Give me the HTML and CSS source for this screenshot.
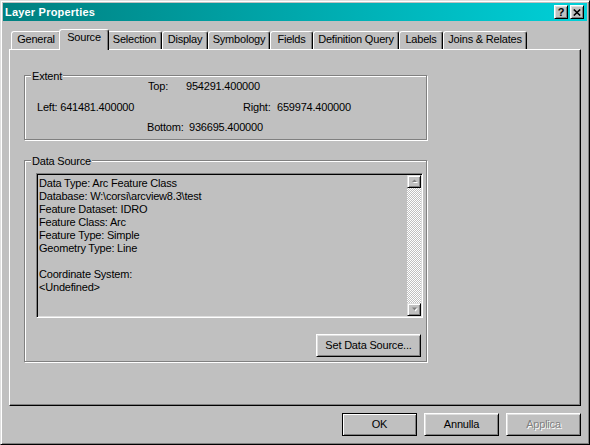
FILE: index.html
```html
<!DOCTYPE html>
<html>
<head>
<meta charset="utf-8">
<title>Layer Properties</title>
<link rel="stylesheet" href="styles.css">
</head>
<body>
<div class="window">
  <div class="titlebar">
    <span class="title">Layer Properties</span>
    <div class="caption-buttons">
      <button class="cap-btn cap-help">?</button>
      <button class="cap-btn cap-close"><svg width="8" height="7" viewBox="0 0 8 7"><path d="M0.8 0.5L7.2 6.5M7.2 0.5L0.8 6.5" stroke="#000" stroke-width="1.6" fill="none"/></svg></button>
    </div>
  </div>
  <div class="tabs">
    <div class="tab t-general">General</div>
    <div class="tab tab-active t-source">Source</div>
    <div class="tab t-selection">Selection</div>
    <div class="tab t-display">Display</div>
    <div class="tab t-symbology">Symbology</div>
    <div class="tab t-fields">Fields</div>
    <div class="tab t-defquery">Definition Query</div>
    <div class="tab t-labels">Labels</div>
    <div class="tab t-joins">Joins &amp; Relates</div>
  </div>
  <div class="panel">
    <div class="group group-extent">
      <span class="group-label">Extent</span>
      <div class="ext-row row-top"><span class="lbl-top">Top:</span><span>954291.400000</span></div>
      <div class="ext-row row-mid"><span class="lbl-left">Left: 641481.400000</span><span class="lbl-right">Right:</span><span>659974.400000</span></div>
      <div class="ext-row row-bottom"><span class="lbl-bottom">Bottom:</span><span>936695.400000</span></div>
    </div>
    <div class="group group-source">
      <span class="group-label">Data Source</span>
      <div class="textbox">
        <div class="textbox-text">
          <div class="line">Data Type: Arc Feature Class</div>
          <div class="line">Database: W:\corsi\arcview8.3\test</div>
          <div class="line">Feature Dataset: IDRO</div>
          <div class="line">Feature Class: Arc</div>
          <div class="line">Feature Type: Simple</div>
          <div class="line">Geometry Type: Line</div>
          <div class="line">&nbsp;</div>
          <div class="line">Coordinate System:</div>
          <div class="line">&lt;Undefined&gt;</div>
        </div>
        <div class="scrollbar">
          <div class="sb-btn"><svg width="7" height="5" viewBox="0 0 7 5"><path d="M2 4h5L4.5 1.5z" fill="#fff"/><path d="M1 3h5L3.5 0.5z" fill="#808080"/></svg></div>
          <div class="sb-track"></div>
          <div class="sb-btn"><svg width="7" height="5" viewBox="0 0 7 5"><path d="M2 1.5h5L4.5 4.5z" fill="#fff"/><path d="M1 0.5h5L3.5 3.5z" fill="#808080"/></svg></div>
        </div>
      </div>
      <div class="source-actions">
        <button class="btn btn-set">Set Data Source...</button>
      </div>
    </div>
  </div>
  <div class="dialog-buttons">
    <button class="btn btn-default">OK</button>
    <button class="btn">Annulla</button>
    <button class="btn btn-disabled" disabled>Applica</button>
  </div>
</div>
</body>
</html>
```

FILE: styles.css
```css
* { box-sizing: border-box; }
html, body { margin: 0; padding: 0; background: #c0c0c0; }
body {
  font-family: "Liberation Sans", Arial, sans-serif;
  font-size: 11px;
  line-height: 13px;
  letter-spacing: -0.2px;
  color: #000;
}
.window {
  width: 590px;
  height: 445px;
  border: 1px solid;
  border-color: #dfdfdf #000 #000 #dfdfdf;
  box-shadow: inset 1px 1px #fff, inset -1px -1px #808080;
  padding: 2px;
  display: flex;
  flex-direction: column;
  background: #c0c0c0;
}
.titlebar {
  height: 18px;
  flex-shrink: 0;
  display: flex;
  align-items: flex-start;
  padding-left: 2px;
  background: linear-gradient(to right, #008080, #00d0d8);
}
.title {
  flex: 1;
  line-height: 18px;
  font-weight: bold;
  color: #fff;
  letter-spacing: 0.2px;
}
.caption-buttons {
  display: flex;
  gap: 2px;
  margin: 2px 3px 0 0;
}
.cap-btn {
  width: 14px;
  height: 14px;
  padding: 0;
  border: 1px solid;
  border-color: #fff #000 #000 #fff;
  box-shadow: inset 1px 1px #dfdfdf, inset -1px -1px #808080;
  background: #c0c0c0;
  display: flex;
  align-items: center;
  justify-content: center;
  font-family: "Liberation Sans", Arial, sans-serif;
  font-size: 11px;
  font-weight: bold;
  line-height: 11px;
  color: #000;
}
.cap-close svg { display: block; }

.tabs {
  display: flex;
  align-items: flex-end;
  height: 20px;
  flex-shrink: 0;
  margin-top: 8px;
  padding-left: 8px;
}
.tab {
  height: 18px;
  border: 1px solid #fff;
  border-right-color: #000;
  border-bottom: 0;
  border-radius: 3px 3px 0 0;
  box-shadow: inset -1px 0 #808080;
  background: #c0c0c0;
  padding-top: 1px;
  text-align: center;
  white-space: nowrap;
}
.tab-active {
  height: 21px;
  margin: 0 -2px -1px;
  position: relative;
  z-index: 1;
}
.t-general { width: 50px; }
.t-source { width: 50px; }
.t-selection { width: 55px; }
.t-display { width: 46px; }
.t-symbology { width: 62px; }
.t-fields { width: 43px; }
.t-defquery { width: 86px; }
.t-labels { width: 44px; }
.t-joins { width: 84px; }

.panel {
  height: 357px;
  flex-shrink: 0;
  margin: 0 6px;
  border: 1px solid;
  border-color: #fff #000 #000 #fff;
  box-shadow: inset -1px -1px #808080;
  padding: 25px 0 0 14px;
}
.group {
  position: relative;
  width: 403px;
  border: 1px solid #808080;
  box-shadow: inset 1px 1px #fff, 1px 1px #fff;
}
.group-label {
  position: absolute;
  top: -6px;
  left: 6px;
  padding: 0 1px;
  background: #c0c0c0;
  line-height: 13px;
}
.group-extent {
  height: 65px;
  padding-top: 4px;
}
.ext-row { display: flex; height: 13px; white-space: nowrap; }
.row-top { padding-left: 123px; }
.row-mid { padding-left: 12px; margin-top: 8px; }
.row-bottom { padding-left: 122px; margin-top: 7px; }
.lbl-top { width: 38px; }
.lbl-left { width: 206px; }
.lbl-right { width: 34px; }
.lbl-bottom { width: 42px; }

.group-source {
  height: 202px;
  margin-top: 20px;
  padding: 12px 0 0 11px;
}
.textbox {
  width: 387px;
  height: 145px;
  display: flex;
  border: 1px solid;
  border-color: #808080 #fff #fff #808080;
  box-shadow: inset 1px 1px #000, inset -1px -1px #dfdfdf;
  padding: 1px;
}
.textbox-text {
  flex: 1;
  padding: 2px 0 0 1px;
  white-space: nowrap;
  overflow: hidden;
}
.line { height: 13px; }
.scrollbar {
  width: 14px;
  display: flex;
  flex-direction: column;
}
.sb-btn {
  height: 13px;
  border: 1px solid;
  border-color: #dfdfdf #000 #000 #dfdfdf;
  box-shadow: inset 1px 1px #fff, inset -1px -1px #808080;
  background: #c0c0c0;
  display: flex;
  align-items: center;
  justify-content: center;
}
.sb-btn svg { display: block; }
.sb-track {
  flex: 1;
  background: repeating-conic-gradient(#fff 0 25%, #c0c0c0 0 50%) 0 0 / 2px 2px;
}
.source-actions {
  width: 387px;
  display: flex;
  justify-content: flex-end;
  padding-right: 2px;
  margin-top: 16px;
}

.btn {
  width: 75px;
  height: 23px;
  padding: 0;
  font: inherit;
  letter-spacing: inherit;
  color: #000;
  background: #c0c0c0;
  border: 1px solid;
  border-color: #fff #000 #000 #fff;
  box-shadow: inset 1px 1px #dfdfdf, inset -1px -1px #808080;
  text-align: center;
}
.btn-set { width: 105px; }
.btn-default {
  border-color: #000;
  box-shadow: inset 1px 1px #fff, inset -1px -1px #808080;
}
.btn-disabled {
  color: #808080;
  text-shadow: 1px 1px #fff;
}
.dialog-buttons {
  display: flex;
  justify-content: flex-end;
  gap: 7px;
  margin: 7px 6px 0 0;
  flex-shrink: 0;
}
```
